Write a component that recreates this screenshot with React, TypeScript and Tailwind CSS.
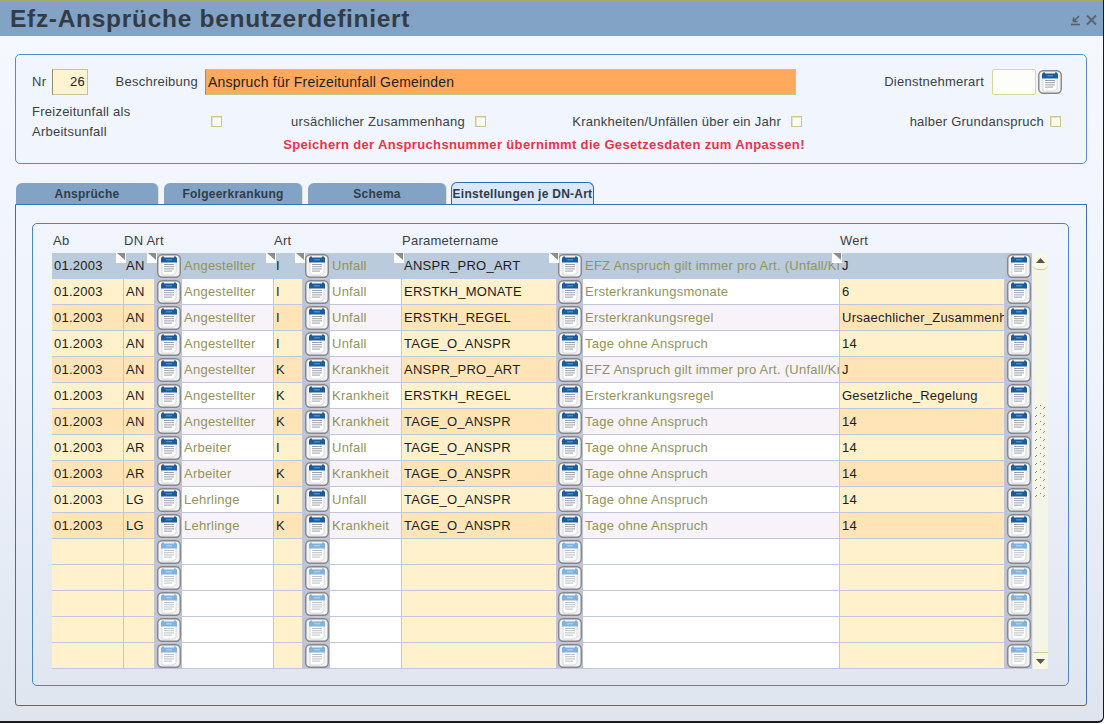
import React from "react";

type Row = { ab: string; dn: string; name: string; art: string; artName: string; param: string; desc: string; wert: string };

const r = (ab: string, dn: string, name: string, art: string, artName: string, param: string, desc: string, wert: string): Row => ({ ab, dn, name, art, artName, param, desc, wert });

const rows: Row[] = [
  r("01.2003", "AN", "Angestellter", "I", "Unfall", "ANSPR_PRO_ART", "EFZ Anspruch gilt immer pro Art. (Unfall/Krankheit)", "J"),
  r("01.2003", "AN", "Angestellter", "I", "Unfall", "ERSTKH_MONATE", "Ersterkrankungsmonate", "6"),
  r("01.2003", "AN", "Angestellter", "I", "Unfall", "ERSTKH_REGEL", "Ersterkrankungsregel", "Ursaechlicher_Zusammenhang"),
  r("01.2003", "AN", "Angestellter", "I", "Unfall", "TAGE_O_ANSPR", "Tage ohne Anspruch", "14"),
  r("01.2003", "AN", "Angestellter", "K", "Krankheit", "ANSPR_PRO_ART", "EFZ Anspruch gilt immer pro Art. (Unfall/Krankheit)", "J"),
  r("01.2003", "AN", "Angestellter", "K", "Krankheit", "ERSTKH_REGEL", "Ersterkrankungsregel", "Gesetzliche_Regelung"),
  r("01.2003", "AN", "Angestellter", "K", "Krankheit", "TAGE_O_ANSPR", "Tage ohne Anspruch", "14"),
  r("01.2003", "AR", "Arbeiter", "I", "Unfall", "TAGE_O_ANSPR", "Tage ohne Anspruch", "14"),
  r("01.2003", "AR", "Arbeiter", "K", "Krankheit", "TAGE_O_ANSPR", "Tage ohne Anspruch", "14"),
  r("01.2003", "LG", "Lehrlinge", "I", "Unfall", "TAGE_O_ANSPR", "Tage ohne Anspruch", "14"),
  r("01.2003", "LG", "Lehrlinge", "K", "Krankheit", "TAGE_O_ANSPR", "Tage ohne Anspruch", "14"),
  r("", "", "", "", "", "", "", ""),
  r("", "", "", "", "", "", "", ""),
  r("", "", "", "", "", "", "", ""),
  r("", "", "", "", "", "", "", ""),
  r("", "", "", "", "", "", "", ""),
];

function CalIcon({ faded = false }: { faded?: boolean }) {
  const top = faded ? "#7fb2dc" : "#1c5c9c";
  const bar = faded ? "#a9cde8" : "#3f8cc8";
  const line = faded ? "#b4b8c0" : "#8d94a0";
  return (
    <svg width="24" height="24" viewBox="0 0 24 24" className="block">
      <rect x="0.75" y="0.75" width="22.5" height="22.5" rx="4.5" fill="#f3f3f3" stroke="#85858b" strokeWidth="1.4" />
      <path d="M5 6h14v13l-3 2H5z" fill="#ffffff" stroke="#c5c8cc" strokeWidth="0.6" />
      <rect x="4" y="3.5" width="16" height="5" fill={top} />
      <rect x="9" y="5" width="6" height="1.5" fill={bar} />
      <rect x="5" y="2.5" width="2" height="2" fill={top} />
      <rect x="17" y="2.5" width="2" height="2" fill={top} />
      <path d="M7 10.5h10M7 12.7h10M7 14.9h10M7 17.1h8" stroke={line} strokeWidth="0.9" />
    </svg>
  );
}

function Notch() {
  return (
    <span className="absolute right-[-3px] top-0 z-10 h-[10px] w-[10px] bg-white">
      <svg width="10" height="10" viewBox="0 0 10 10" className="block">
        <path d="M1 0H9V7Z" fill="#8d8d8d" />
      </svg>
    </span>
  );
}

function Check() {
  return <span className="block h-[11px] w-[11px] shrink-0 border border-[#c9c98f] bg-[#fbfbef] shadow-[inset_1px_1px_0_#e4e4c4]" />;
}

const gridCols = "grid grid-cols-[72px_31px_27px_92px_29px_27px_72px_155px_26px_257px_165px_27px]";

function Text({ children, muted = false }: { children?: React.ReactNode; muted?: boolean }) {
  return (
    <span className={`block overflow-hidden whitespace-nowrap pl-[2px] leading-[25px] ${muted ? "text-[#93935a]" : "text-[#1c1c1c]"}`}>
      {children}
    </span>
  );
}

function TableRow({ row, index }: { row: Row; index: number }) {
  const selected = index === 0;
  const empty = row.ab === "";
  const even = index % 2 === 0;
  const yellow = selected ? "bg-[#b9cbdc]" : empty ? "bg-[#fff1cc]" : even ? "bg-[#ffe4b8]" : "bg-[#fff1cc]";
  const white = selected ? "bg-[#b9cbdc]" : empty ? "bg-white" : even ? "bg-[#f7f3f8]" : "bg-white";
  const line = selected ? "border-[#b9cbdc]" : "border-[#c4c7d8]";
  const cell = `relative h-[26px] border-b border-r ${line}`;
  const icon = `flex h-[26px] items-center justify-center border-b ${line} ${selected ? "bg-[#bcc6d6]" : "bg-[#bec3d1]"}`;
  return (
    <div className={gridCols}>
      <div className={`${cell} ${yellow}`}>
        <Text>{row.ab}</Text>
        {selected && <Notch />}
      </div>
      <div className={`${cell} ${yellow}`}>
        <Text>{row.dn}</Text>
        {selected && <Notch />}
      </div>
      <div className={icon}><CalIcon faded={empty} /></div>
      <div className={`${cell} ${white}`}>
        <Text muted>{row.name}</Text>
        {selected && <Notch />}
      </div>
      <div className={`${cell} ${yellow}`}>
        <Text>{row.art}</Text>
        {selected && <Notch />}
      </div>
      <div className={icon}><CalIcon faded={empty} /></div>
      <div className={`${cell} ${white}`}>
        <Text muted>{row.artName}</Text>
        {selected && <Notch />}
      </div>
      <div className={`${cell} ${yellow}`}>
        <Text>{row.param}</Text>
        {selected && <Notch />}
      </div>
      <div className={icon}><CalIcon faded={empty} /></div>
      <div className={`${cell} ${white}`}>
        <Text muted>{row.desc}</Text>
        {selected && <Notch />}
      </div>
      <div className={`${cell} ${yellow}`}>
        <Text>{row.wert}</Text>
      </div>
      <div className={icon}><CalIcon faded={empty} /></div>
    </div>
  );
}

function Tab({ label, width, active = false }: { label: string; width: string; active?: boolean }) {
  return (
    <div
      className={`${width} flex h-[21px] items-center justify-center rounded-t-[6px] text-[12px] font-bold ${
        active
          ? "relative z-10 h-[22px] border border-b-0 border-[#2f6ba8] bg-[#dbe8fb] text-[#2f3a46]"
          : "border-r border-[#dfe4c0] bg-[#82a3c6] text-[#323c46]"
      }`}
    >
      {label}
    </div>
  );
}

export default function App() {
  return (
    <div className="h-[724px] w-[1105px] overflow-hidden bg-white font-['Liberation_Sans',Arial,sans-serif] text-[13px] tracking-[0.25px] text-[#3c3f46]">
      <div className="flex h-[723px] w-[1104px] flex-col overflow-hidden rounded-br-[6px] border-r border-b-2 border-[#1a1a1a] bg-gradient-to-b from-[#f6f8ff] via-[#eef3fc] to-[#dfe5ee]">
        <div className="flex h-[36px] shrink-0 items-center justify-between border-t-2 border-[#a8a66c] bg-[#82a3c6] pl-[10px] pr-[5px]">
          <h1 className="text-[24.5px] font-bold leading-none tracking-[0.7px] text-[#333c44]">Efz-Ansprüche benutzerdefiniert</h1>
          <svg width="28" height="12" viewBox="0 0 28 12" className="mt-[2px]" fill="none">
            <path d="M9 2 4.5 6.5M3.5 3.5v4h4" stroke="#55606a" strokeWidth="1.6" />
            <path d="M1 10.5h9" stroke="#55606a" strokeWidth="1.6" />
            <path d="M17 1.5l9 9M26 1.5l-9 9" stroke="#5a646e" strokeWidth="2" />
          </svg>
        </div>
        <div className="flex flex-1 flex-col px-[15px] pt-[18px]">
          <section className="h-[110px] w-[1072px] shrink-0 rounded-[5px] border border-[#5c8bc4] bg-[#f0f5fe] pl-[16px] pr-[24px] pt-[14px]">
            <div className="flex h-[26px] items-center">
              <span className="w-[20px]">Nr</span>
              <span className="block h-[26px] w-[36px] border border-[#c4c49a] border-l-[#8f8f6c] bg-[#fff3d0] pr-[2px] text-right leading-[24px] text-[#222]">26</span>
              <span className="w-[117px] pr-[7px] text-right">Beschreibung</span>
              <span className="block h-[26px] w-[591px] border border-[#c4c49a] border-l-[#8f8f6c] bg-[#ffa95c] pl-[2px] text-[14px] leading-[24px] tracking-[0.2px] text-[#222]">Anspruch für Freizeitunfall Gemeinden</span>
              <span className="flex-1 pr-[8px] text-right">Dienstnehmerart</span>
              <span className="block h-[26px] w-[44px] rounded-[2px] border border-[#d8d8a4] bg-[#fdfdfa]" />
              <span className="ml-[2px]"><CalIcon /></span>
            </div>
            <div className="mt-[7px] grid h-[24px] grid-cols-[190px_264px_316px_259px] items-center">
              <div className="flex items-center justify-end gap-[10px]"><span>Freizeitunfall als Arbeitsunfall</span><Check /></div>
              <div className="flex items-center justify-end gap-[10px]"><span>ursächlicher Zusammenhang</span><Check /></div>
              <div className="flex items-center justify-end gap-[10px]"><span>Krankheiten/Unfällen über ein Jahr</span><Check /></div>
              <div className="flex items-center justify-end gap-[6px]"><span>halber Grundanspruch</span><Check /></div>
            </div>
            <p className="mt-[9px] pr-[6px] text-center text-[13px] font-bold tracking-[0.35px] text-[#ee3344]">
              Speichern der Anspruchsnummer übernimmt die Gesetzesdaten zum Anpassen!
            </p>
          </section>
          <div className="mt-[19px] flex h-[21px] shrink-0 items-end gap-[5px] pl-[1px]">
            <Tab label="Ansprüche" width="w-[143px]" />
            <Tab label="Folgeerkrankung" width="w-[139px]" />
            <Tab label="Schema" width="w-[139px]" />
            <div className="-ml-[1px]"><Tab label="Einstellungen je DN-Art" width="w-[143px]" active /></div>
          </div>
          <section className="h-[502px] w-[1072px] shrink-0 rounded-b-[3px] border border-[#3d70a8] px-[16px] pt-[18px]">
            <div className="h-[463px] w-[1037px] rounded-[5px] border border-[#4f83c0] pl-[19px] pt-[9px]">
              <div className={`${gridCols} h-[20px] leading-[15px]`}>
                <span className="pl-[1px]">Ab</span>
                <span className="col-span-3">DN Art</span>
                <span className="col-span-3">Art</span>
                <span className="col-span-3">Parametername</span>
                <span className="col-span-2">Wert</span>
              </div>
              <div className="flex">
                <div className="w-[980px]">
                  {rows.map((row, i) => (
                    <TableRow key={i} row={row} index={i} />
                  ))}
                </div>
                <div className="ml-[1px] flex h-[416px] w-[15px] flex-col bg-[#f4f5e6]">
                  <div className="flex h-[17px] items-center justify-center rounded-b-[5px] rounded-t-[4px] border-b border-[#c8c890] bg-[#f8f8e4]">
                    <svg width="9" height="6" viewBox="0 0 9 6"><path d="M4.5 0 9 5H0z" fill="#555" /></svg>
                  </div>
                  <svg width="15" height="98" viewBox="0 0 15 98" className="mt-[133px] block">
                    <defs>
                      <pattern id="grip" width="8" height="8" patternUnits="userSpaceOnUse">
                        <path d="M2 6 4 4M7 3 9 1" stroke="#8d8d70" strokeWidth="1" />
                      </pattern>
                    </defs>
                    <rect width="15" height="98" fill="url(#grip)" />
                  </svg>
                  <div className="mt-auto flex h-[17px] items-center justify-center rounded-b-[5px] border-t border-[#c8c890] bg-[#f8f8e4]">
                    <svg width="9" height="6" viewBox="0 0 9 6"><path d="M4.5 6 9 1H0z" fill="#555" /></svg>
                  </div>
                </div>
              </div>
            </div>
          </section>
        </div>
      </div>
    </div>
  );
}
